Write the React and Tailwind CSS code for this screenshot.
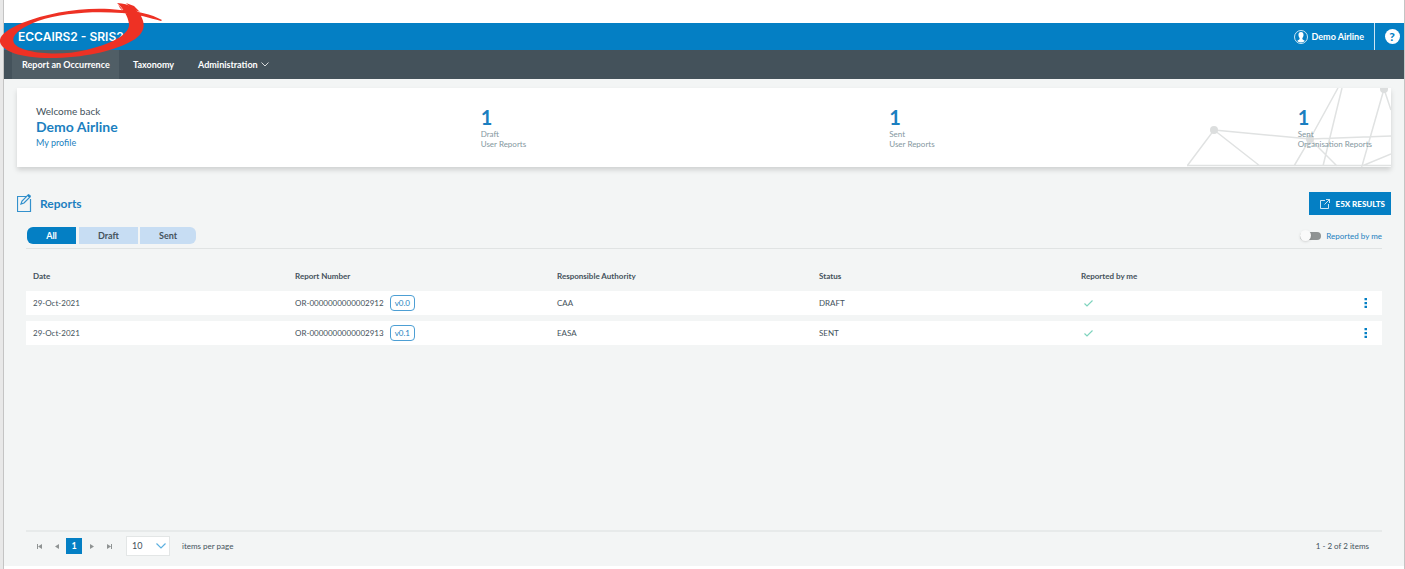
import React, { useState } from 'react';

const STATS = [
  { key: 'draft', count: 1, label: 'Draft', owner: 'User Reports' },
  { key: 'sent', count: 1, label: 'Sent', owner: 'User Reports' },
  { key: 'org', count: 1, label: 'Sent', owner: 'Organisation Reports' },
];

const REPORTS = [
  { date: '29-Oct-2021', number: 'OR-0000000000002912', version: 'v0.0', authority: 'CAA', status: 'DRAFT' },
  { date: '29-Oct-2021', number: 'OR-0000000000002913', version: 'v0.1', authority: 'EASA', status: 'SENT' },
];

const COLUMNS = ['Date', 'Report Number', 'Responsible Authority', 'Status', 'Reported by me'];

const TABS = [
  { key: 'All', className: 'w-[49px] rounded-l-md mr-[3px]' },
  { key: 'Draft', className: 'w-[59px] mr-[2px]' },
  { key: 'Sent', className: 'w-[56px] rounded-r-md' },
];

function MarkerCircle() {
  return (
    <svg className="absolute left-0 top-0 z-10 pointer-events-none" width="170" height="62" viewBox="0 0 170 62" fill="#ee3124" aria-hidden="true">
      <path d="M162 20C151 14 138 11 120 10C88 6 50 12 22 23C6 30-1 36 0 42C2 51 20 58 50 58C84 58 112 51 128 43C143 36 147 27 141 16C136 8 130 4 117 3C123 8 128 16 129 24C130 34 112 44 86 50C58 57 20 53 14 43C10 35 22 27 38 21C62 13 92 11 122 13C138 14 150 18 161 21Z" />
      <path d="M126 3L134 6L140 12L132 9ZM118 4L126 14L120 8Z" />
    </svg>
  );
}

function Network() {
  return (
    <svg className="absolute right-0 top-0" width="204" height="79" viewBox="0 0 204 79" fill="none" stroke="#e0e2e2" strokeWidth="1.5" aria-hidden="true">
      <path d="M0 78L27 42L73 78M27 42L123 51L204 48M0 77.5H204M151 0L123 51L107 78M155 0L136 78M123 51L150 78M197 1L175 78L204 66M197 1L204 22" />
      <g fill="#dcdede" stroke="none">
        <circle cx="27" cy="42" r="4" />
        <circle cx="123" cy="51" r="4" />
        <circle cx="197" cy="1" r="4" />
      </g>
    </svg>
  );
}

export default function App() {
  const [tab, setTab] = useState('All');
  const [mine, setMine] = useState(false);

  return (
    <div className="relative min-h-screen flex pl-[3px] bg-[#e8e8e8]">
      <MarkerCircle />

      <div className="grow flex flex-col bg-white pt-[23px] pb-[3px] border-x border-[#c4c4c4] font-['Lato',sans-serif] text-[8px] leading-[10px] text-[#44525b]">
        {/* Brand bar */}
        <header className="h-[27px] flex items-center justify-between bg-[#047fc4] text-white text-[9px]">
          <h1 className="pl-[14px] font-['Inter',sans-serif] text-[12px] leading-4 font-semibold">ECCAIRS2 - SRIS2</h1>
          <div className="h-full flex items-center">
            <a href="#account" className="flex items-center gap-[4px] pr-[10px] font-bold">
              <svg width="14" height="14" viewBox="0 0 14 14" fill="none" aria-hidden="true">
                <circle cx="7" cy="7" r="6.5" stroke="#fff" strokeWidth="0.8" />
                <path d="M7 2C5 2 4.3 3.3 4.5 5.2C4.6 6.8 5.3 7.600 5.7 8.2C5.7 9.7 4.5 9.8 3.2 10.7C4.5 13 9.5 13 10.8 10.7C9.5 9.8 8.3 9.7 8.3 8.2C8.7 7.6 9.4 6.8 9.5 5.2C9.7 3.3 9 2 7 2Z" fill="#fff" />
              </svg>
              Demo Airline
            </a>
            <button aria-label="Help" className="h-full w-[30px] pl-[5px] flex items-center justify-center border-l border-white/80">
              <span className="size-[15px] rounded-full bg-white text-[#047fc4] text-[12px] leading-[15px] font-black">?</span>
            </button>
          </div>
        </header>

        {/* Navigation */}
        <nav className="h-[29px] flex items-stretch pl-2 bg-[#44525b] text-white text-[9px] font-bold">
          <a href="#report" className="flex items-center w-[107px] pl-[10px] bg-[#505e66]">Report an Occurrence</a>
          <a href="#taxonomy" className="flex items-center pl-[14px]">Taxonomy</a>
          <button className="flex items-center gap-[3px] pl-[24px]">
            Administration
            <svg width="8" height="5" viewBox="0 0 8 5" fill="none" stroke="#fff" strokeWidth="0.8" aria-hidden="true"><path d="M0.5 0.5L4 4L7.5 0.5" /></svg>
          </button>
        </nav>

        <main className="grow flex flex-col bg-[#f3f5f5] px-[13px] pt-[9px]">
          <section className="relative h-[79px] bg-white px-[19px] pt-[17px] flex justify-between shadow-[0_3px_5px_rgba(0,0,0,0.15)]">
            <Network />
            <div>
              <p className="text-[10px] leading-[13px]">Welcome back</p>
              <h2 className="text-[14px] leading-[17px] font-bold text-[#1b7fc0]">Demo Airline</h2>
              <a href="#profile" className="block text-[9px] leading-[15px] text-[#1b7fc0]">My profile</a>
            </div>
            {STATS.map((s) => (
              <div key={s.key} className="relative text-[#8497a0]">
                <p className="text-[20px] leading-[24px] font-bold text-[#1b7fc0]">{s.count}</p>
                <p>{s.label}</p>
                <p>{s.owner}</p>
              </div>
            ))}
          </section>

          <div className="mt-[25px] flex items-center justify-between">
            <h2 className="flex items-center gap-2 text-[12px] leading-4 font-bold text-[#1b7fc0]">
              <svg width="15" height="19" viewBox="0 0 15 19" fill="none" stroke="#3391cd" aria-hidden="true">
                <path d="M10 2.5H0.5V17.5H13.5V5" strokeWidth="1.2" />
                <path d="M4 10L5 7L11 1L13 3L7 9Z" strokeWidth="1.2" />
                <path d="M10.5 1.5L12 0.5L13.5 2L12.5 3.5Z" fill="#1b7fc0" />
              </svg>
              Reports
            </h2>
            <button className="h-[23px] pl-[11px] pr-[6px] flex items-center gap-[6px] bg-[#047fc4] text-white font-black">
              <svg width="10" height="10" viewBox="0 0 10 10" fill="none" stroke="#fff" strokeWidth="0.8" aria-hidden="true">
                <path d="M5 1.5H0.5V9.5H8.5V5M6 0.5H9.5V4M9.5 0.5L4.5 5.5" />
              </svg>
              E5X RESULTS
            </button>
          </div>

          <section className="grow flex flex-col px-[9px] pt-[12px]">
            <div className="flex items-center justify-between pb-[4px] border-b border-[#e0e3e3]">
              <div className="flex pl-px">
                {TABS.map((t) => (
                  <button
                    key={t.key}
                    onClick={() => setTab(t.key)}
                    className={`h-[17px] text-[9px] font-bold ${t.className} ${tab === t.key ? 'bg-[#047fc4] text-white' : 'bg-[#c7ddf3]'}`}
                  >
                    {t.key}
                  </button>
                ))}
              </div>
              <label className="flex items-center gap-[5px] text-[#1b7fc0]">
                <input
                  type="checkbox"
                  checked={mine}
                  onChange={(e) => setMine(e.target.checked)}
                  className="appearance-none flex items-center w-[21px] h-[8px] rounded-full bg-[#8f9393] before:size-[11px] before:rounded-full before:bg-[#fafafa] before:shadow-sm checked:bg-[#047fc4] checked:justify-end"
                />
                Reported by me
              </label>
            </div>

            <table className="mt-[12px] w-full table-fixed border-separate border-spacing-x-0 border-spacing-y-[6px] text-left">
              <thead>
                <tr className="h-[18px]">
                  {COLUMNS.map((c) => (
                    <th key={c} className="pl-[7px] font-bold">{c}</th>
                  ))}
                  <th className="w-[46px]" aria-label="Actions" />
                </tr>
              </thead>
              <tbody>
                {REPORTS.map((r) => (
                  <tr key={r.number} className="h-[24px] bg-white">
                    <td className="pl-[7px]">{r.date}</td>
                    <td className="pl-[7px]">
                      <div className="flex items-center gap-[6px]">
                        {r.number}
                        <span className="h-4 px-[4px] flex items-center rounded-sm border border-[#4d9fd4] text-[#1b7fc0]">{r.version}</span>
                      </div>
                    </td>
                    <td className="pl-[7px]">{r.authority}</td>
                    <td className="pl-[7px]">{r.status}</td>
                    <td className="pl-[10px]">
                      <svg width="9" height="7" viewBox="0 0 9 7" fill="none" stroke="#7ed3bd" strokeWidth="1.2" role="img" aria-label="Yes"><path d="M0.5 3.5L3 6L8.5 0.5" /></svg>
                    </td>
                    <td>
                      <button aria-label="Row actions" className="flex w-full justify-center pl-[14px]">
                        <svg width="4" height="10" viewBox="0 0 4 10" fill="#047fc4" aria-hidden="true">
                          <path d="M0.5 0H3V2.2H0.5ZM0.5 4H3V6.2H0.5ZM0.5 7.8H3V10H0.5Z" />
                        </svg>
                      </button>
                    </td>
                  </tr>
                ))}
              </tbody>
            </table>

            {/* Pager */}
            <footer className="mt-auto h-[36px] pb-[6px] pl-[6px] pr-[13px] flex items-center border-t-2 border-[#e7eaea]">
              <button aria-label="First page" className="w-[14px] flex justify-center">
                <svg width="5" height="5" viewBox="0 0 5 5" fill="#8f9393"><path d="M0 0H1V5H0ZM5 0V5L1 2.5Z" /></svg>
              </button>
              <button aria-label="Previous page" className="ml-[4px] w-[14px] flex justify-center">
                <svg width="4" height="5" viewBox="0 0 4 5" fill="#8f9393"><path d="M4 0V5L0 2.5Z" /></svg>
              </button>
              <button aria-current="page" className="ml-[2px] size-4 bg-[#047fc4] text-white text-[9px] font-bold">1</button>
              <button aria-label="Next page" className="ml-[3px] w-[14px] flex justify-center">
                <svg width="4" height="5" viewBox="0 0 4 5" fill="#8f9393"><path d="M0 0V5L4 2.5Z" /></svg>
              </button>
              <button aria-label="Last page" className="ml-[3px] w-[14px] flex justify-center">
                <svg width="5" height="5" viewBox="0 0 5 5" fill="#8f9393"><path d="M4 0H5V5H4ZM0 0V5L4 2.5Z" /></svg>
              </button>
              <label className="ml-[10px] flex items-center gap-[12px]">
                <span className="relative flex items-center">
                  <select defaultValue="10" className="appearance-none w-[44px] h-[20px] pl-[5px] bg-white border border-[#e3e6e6] text-[9px]">
                    <option>10</option>
                    <option>20</option>
                    <option>50</option>
                  </select>
                  <svg className="absolute right-[4px] pointer-events-none" width="10" height="6" viewBox="0 0 10 6" fill="none" stroke="#5db0e0" strokeWidth="1.2" aria-hidden="true"><path d="M0.5 0.5L5 5L9.5 0.5" /></svg>
                </span>
                items per page
              </label>
              <span className="ml-auto">1 - 2 of 2 items</span>
            </footer>
          </section>
        </main>
      </div>
    </div>
  );
}
